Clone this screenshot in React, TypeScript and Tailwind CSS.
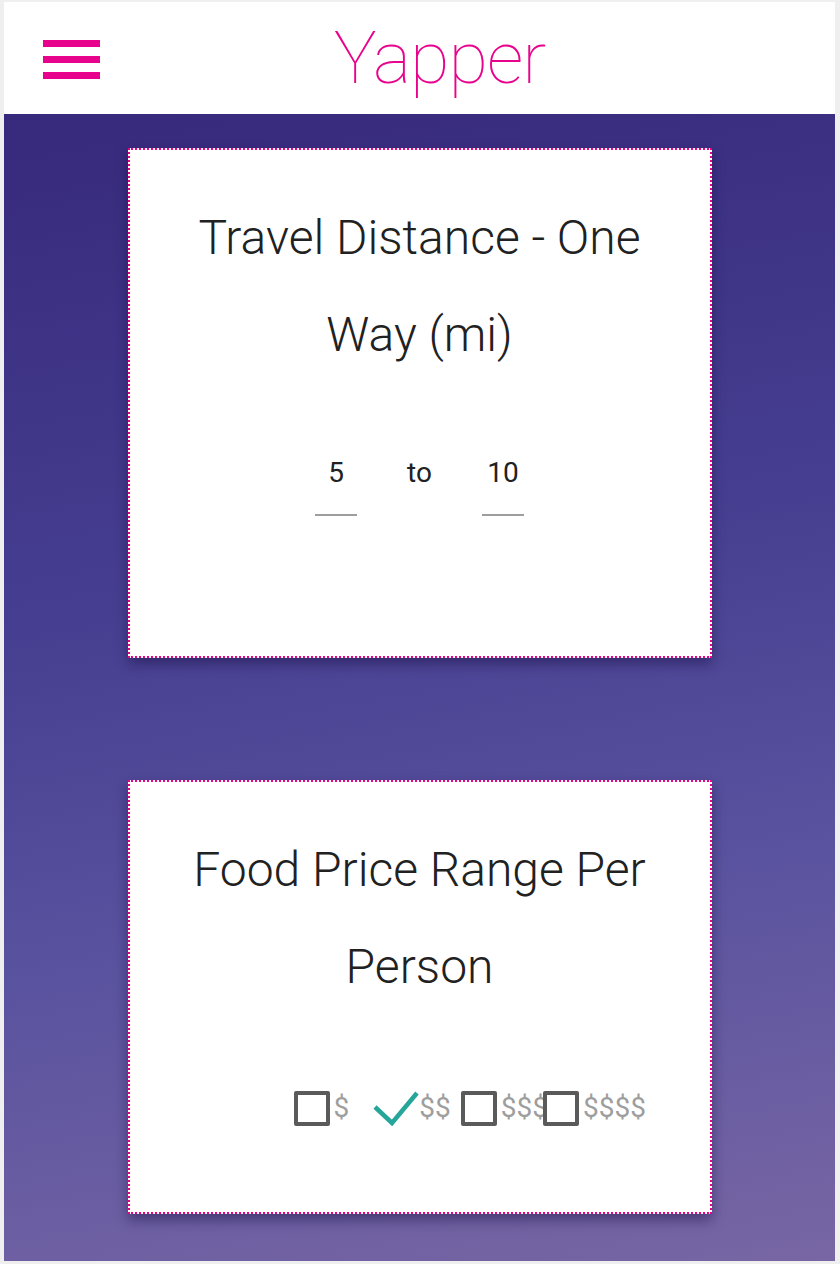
import React from 'react';

const font = { fontFamily: 'Roboto, "Noto Sans", sans-serif' };

const Card: React.FC<{ title: string[]; className?: string; children: React.ReactNode }> = ({ title, className, children }) => (
    <div className={`w-[584px] bg-white border-2 border-dotted border-[#e8008a] shadow-[0_6px_12px_rgba(20,10,60,0.45)] ${className ?? ''}`}>
        <h2 className="pt-[39px] text-center text-[48px] leading-[97px] font-light text-[#212121]">
            {title.map((line, i) => (
                <div key={i}>{line}</div>
            ))}
        </h2>
        {children}
    </div>
);

const Box: React.FC = () => <div className="w-[36px] h-[35px] border-[4px] border-[#5a5a5a] rounded-[2px] shrink-0"></div>;

const Check: React.FC = () => (
    <svg width="46" height="36" viewBox="0 0 46 36" className="shrink-0">
        <path d="M2 17 L19 33 L44 3" fill="none" stroke="#26a69a" strokeWidth="4.5" strokeLinecap="butt" />
    </svg>
);

const App: React.FC = () => {
    const prices = [
        { label: '$', checked: false, ml: 'ml-0' },
        { label: '$$', checked: true, ml: 'ml-[24px]' },
        { label: '$$$', checked: false, ml: 'ml-[10px]' },
        { label: '$$$$', checked: false, ml: 'ml-[-5px]' },
    ];

    return (
        <div className="h-[1264px] bg-[#efefef] pt-[2px] pl-[4px] pr-[5px] pb-[3px] flex flex-col" style={font}>
            <header className="h-[112px] bg-white flex items-center relative shrink-0">
                <div className="absolute left-[39px] top-[38px] flex flex-col gap-[9px]">
                    <span className="block w-[57px] h-[7px] bg-[#e8038c]"></span>
                    <span className="block w-[57px] h-[7px] bg-[#e8038c]"></span>
                    <span className="block w-[57px] h-[7px] bg-[#e8038c]"></span>
                </div>
                <h1 className="w-full pl-[40px] text-center text-[72px] leading-none font-thin text-[#e8038c] tracking-[-1px] mt-[2px]">Yapper</h1>
            </header>

            <main className="flex-1 bg-[linear-gradient(170deg,#37297c_0%,#463f91_40%,#5a539f_68%,#7866a4_100%)] flex flex-col items-center pt-[34px]">
                <Card title={['Travel Distance - One', 'Way (mi)']} className="h-[510px]">
                    <div className="flex justify-center items-start gap-[50px] mt-[73px] text-[28px] text-[#212121]">
                        <div className="w-[42px] flex flex-col items-center">
                            <span className="leading-[34px]">5</span>
                            <span className="block w-[42px] h-[2px] bg-[#9e9e9e] mt-[24px]"></span>
                        </div>
                        <span className="leading-[34px]">to</span>
                        <div className="w-[42px] flex flex-col items-center">
                            <span className="leading-[34px]">10</span>
                            <span className="block w-[42px] h-[2px] bg-[#9e9e9e] mt-[24px]"></span>
                        </div>
                    </div>
                </Card>

                <Card title={['Food Price Range Per', 'Person']} className="h-[434px] mt-[122px]">
                    <div className="flex items-center mt-[75px] pl-[164px] text-[28px] text-[#9e9e9e]">
                        {prices.map((p, i) => (
                            <div key={i} className={`flex items-center ${p.ml}`}>
                                {p.checked ? <Check /> : <Box />}
                                <span className={`leading-[36px] ${p.checked ? 'ml-0' : 'ml-[4px]'}`}>{p.label}</span>
                            </div>
                        ))}
                    </div>
                </Card>
            </main>
        </div>
    );
};

export default App;
